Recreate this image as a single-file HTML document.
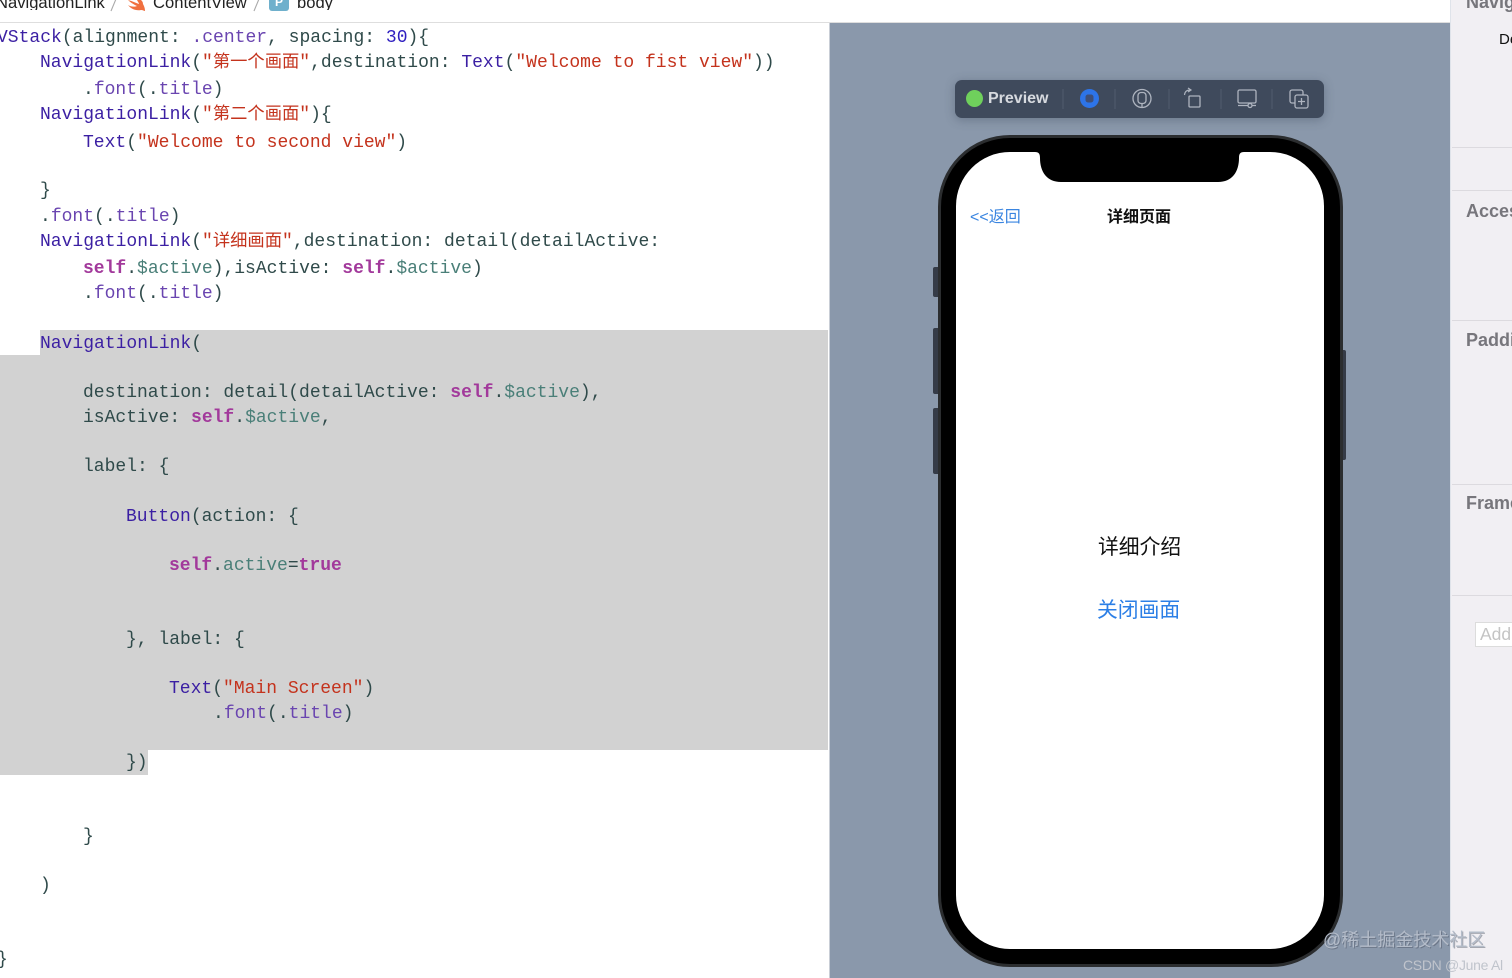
<!DOCTYPE html>
<html><head><meta charset="utf-8"><style>
html,body{margin:0;padding:0;width:1512px;height:978px;overflow:hidden;background:#fff}
body{position:relative;font-family:"Liberation Sans","Noto Sans CJK SC",sans-serif}
#w{position:absolute;left:0;top:0;width:1512px;height:978px;filter:blur(.35px);overflow:hidden}
.a{position:absolute}
.l{position:absolute;margin-top:1px;font:18px/24px "Liberation Mono","Noto Sans CJK SC",monospace;white-space:pre;color:#2f4a4a}
.l i{font-style:normal;font-size:17.3px}
.b{color:#3b1fa3}.p{color:#6a45b0}.s{color:#c4331d}.k{color:#a2399b;font-weight:bold}.v{color:#4a7f78}.n{color:#2f1fc0}.d{color:#1f1f1f}
.h{position:absolute;background:#d2d2d2}
.sec{position:absolute;left:1466px;font-size:18px;font-weight:bold;color:#77767c;line-height:20px;white-space:nowrap}
.hr{position:absolute;left:1452px;width:60px;height:1px;background:#dcdadf}
</style></head><body><div id="w">
<div class="a" style="left:0;top:22px;width:1450px;height:1px;background:#dedede"></div>
<div class="a" style="left:0;top:-6px;font-size:16.600px;line-height:18px;color:#222;white-space:nowrap;width:1440px;height:16px;overflow:hidden"><span class="a" style="left:-4px;top:0">NavigationLink</span><span class="a" style="left:153px;top:0">ContentView</span><span class="a" style="left:297px;top:0">body</span></div>
<svg class="a" style="left:105px;top:0" width="160" height="12" viewBox="0 0 160 12" fill="none" stroke="#aaa" stroke-width="1.100"><path d="M6 11L11 -1M149 11L154 -1"/></svg>
<svg class="a" style="left:126px;top:0" width="20" height="11" viewBox="0 0 20 11"><path d="M2 0 C5 3 9 5 11 6 C9 7 5 7 2 5 C5 9 10 11 15 10 C17 10 18 11 19 11 C19 8 18 6 17 4 C17 2 16 1 15 0 L11 0 C12 2 13 3 13 4 C10 3 6 1 2 0Z" fill="#f0703f"/></svg>
<div class="a" style="left:269px;top:-6px;width:20px;height:17px;border-radius:3px;background:#6fb0cc;color:#fff;font-size:12px;font-weight:bold;text-align:center;line-height:17px">P</div>

<div class="h" style="left:40px;top:330px;width:788px;height:25px"></div>
<div class="h" style="left:0;top:355px;width:828px;height:395px"></div>
<div class="h" style="left:0;top:750px;width:148px;height:25px"></div>

<div class="l" style="left:-3px;top:25px"><span class="b">VStack</span>(alignment: <span class="p">.center</span>, spacing: <span class="n">30</span>){</div>
<div class="l" style="left:40px;top:50px"><span class="b">NavigationLink</span>(<span class="s">"<i>第一个画面</i>"</span>,destination: <span class="b">Text</span>(<span class="s">"Welcome to fist view"</span>))</div>
<div class="l" style="left:83px;top:77px">.<span class="p">font</span>(.<span class="p">title</span>)</div>
<div class="l" style="left:40px;top:102px"><span class="b">NavigationLink</span>(<span class="s">"<i>第二个画面</i>"</span>){</div>
<div class="l" style="left:83px;top:130px"><span class="b">Text</span>(<span class="s">"Welcome to second view"</span>)</div>
<div class="l" style="left:40px;top:178px">}</div>
<div class="l" style="left:40px;top:204px">.<span class="p">font</span>(.<span class="p">title</span>)</div>
<div class="l" style="left:40px;top:229px"><span class="b">NavigationLink</span>(<span class="s">"<i>详细画面</i>"</span>,destination: detail(detailActive:</div>
<div class="l" style="left:83px;top:256px"><span class="k">self</span>.<span class="v">$active</span>),isActive: <span class="k">self</span>.<span class="v">$active</span>)</div>
<div class="l" style="left:83px;top:281px">.<span class="p">font</span>(.<span class="p">title</span>)</div>
<div class="l" style="left:40px;top:331px"><span class="b">NavigationLink</span>(</div>
<div class="l" style="left:83px;top:380px">destination: detail(detailActive: <span class="k">self</span>.<span class="v">$active</span>),</div>
<div class="l" style="left:83px;top:405px">isActive: <span class="k">self</span>.<span class="v">$active</span>,</div>
<div class="l" style="left:83px;top:454px">label: {</div>
<div class="l" style="left:126px;top:504px"><span class="b">Button</span>(action: {</div>
<div class="l" style="left:169px;top:553px"><span class="k">self</span>.<span class="v">active</span>=<span class="k">true</span></div>
<div class="l" style="left:126px;top:627px">}, label: {</div>
<div class="l" style="left:169px;top:676px"><span class="b">Text</span>(<span class="s">"Main Screen"</span>)</div>
<div class="l" style="left:213px;top:701px">.<span class="p">font</span>(.<span class="p">title</span>)</div>
<div class="l" style="left:126px;top:750px">})</div>
<div class="l" style="left:83px;top:824px">}</div>
<div class="l" style="left:40px;top:873px">)</div>
<div class="l" style="left:-3px;top:947px">}</div>

<div class="a" style="left:829px;top:23px;width:621px;height:955px;background:#8a98ab;border-left:1px solid #c9ced6;box-sizing:border-box"></div>
<div class="a" style="left:1450px;top:0;width:62px;height:978px;background:#f1eff3;border-left:1px solid #dfe3ea;box-sizing:border-box"></div>
<div class="hr" style="top:147px"></div><div class="hr" style="top:190px"></div><div class="hr" style="top:320px"></div><div class="hr" style="top:484px"></div><div class="hr" style="top:595px"></div>
<div class="sec" style="top:-8px">Navig</div>
<div class="a" style="left:1499px;top:31px;font-size:15px;line-height:18px;color:#111">De</div>
<div class="sec" style="top:201px">Acces</div>
<div class="sec" style="top:330px">Paddi</div>
<div class="sec" style="top:493px">Frame</div>
<div class="a" style="left:1475px;top:622px;width:40px;height:25px;background:#fff;border:1px solid #dcdcdc;border-right:0;box-sizing:border-box;font-size:17.500px;line-height:23px;color:#c4c4c4;padding-left:4px;overflow:hidden;white-space:nowrap">Add</div>

<div class="a" style="left:955px;top:80px;width:369px;height:38px;background:#3f4a5c;border-radius:7px;box-shadow:0 2px 10px rgba(50,60,80,.35)"></div>
<div class="a" style="left:966px;top:90px;width:17px;height:17px;border-radius:50%;background:#6fd05c"></div>
<div class="a" style="left:988px;top:89px;font-size:16px;line-height:20px;color:#e8eaee;font-weight:bold;opacity:.9">Preview</div>
<svg class="a" style="left:955px;top:80px" width="369" height="38" viewBox="0 0 369 38" fill="none" stroke="#aeb4bf" stroke-width="1.300">
<g stroke="#515c6e" stroke-width="1"><path d="M108 9V29M160 9V29M214 9V29M266 9V29M317 9V29"/></g>
<circle cx="134.500" cy="18.500" r="9.500" fill="#2d74e8" stroke="none"/><rect x="130.500" y="14.500" width="8" height="8" rx="2.500" fill="#3f4f78" stroke="none"/>
<circle cx="187" cy="18.500" r="9"/><rect x="183" y="12.500" width="8" height="11" rx="3"/><path d="M187 23.500V27.500"/>
<rect x="234" y="16" width="11" height="11" rx="1"/><path d="M229.500 15C230 11 232 10 236 10M233 8L236 10L233 12" stroke-width="1.200"/>
<rect x="283" y="10" width="18" height="13" rx="1.500"/><path d="M283 25.500H301"/><circle cx="295" cy="25.500" r="2" fill="#3f4a5c"/>
<rect x="335" y="10" width="13" height="13" rx="2"/><rect x="340" y="15" width="13" height="13" rx="2" fill="#3f4a5c"/><path d="M346.500 18V25M343 21.500H350"/>
</svg>

<div class="a" style="left:933px;top:267px;width:5px;height:30px;background:#353b47;border-radius:2px 0 0 2px"></div>
<div class="a" style="left:933px;top:328px;width:5px;height:66px;background:#353b47;border-radius:2px 0 0 2px"></div>
<div class="a" style="left:933px;top:408px;width:5px;height:66px;background:#353b47;border-radius:2px 0 0 2px"></div>
<div class="a" style="left:1343px;top:350px;width:3px;height:110px;background:#353b47;border-radius:0 2px 2px 0"></div>
<div class="a" style="left:938px;top:135px;width:405px;height:832px;box-sizing:border-box;background:#000;border-radius:72px;border:3px solid #2b2d2f"></div>
<div class="a" style="left:956px;top:152px;width:368px;height:797px;background:#fff;border-radius:54px"></div>
<svg class="a" style="left:1030px;top:150px" width="219" height="34" viewBox="0 0 219 34"><path d="M0 0H219V2H214C210 2 209 4 209 8C209 22 202 32 188 32H31C17 32 10 22 10 8C10 4 9 2 5 2H0Z" fill="#000"/></svg>
<div class="a" style="left:970px;top:208px;font-size:16px;line-height:19px;color:#3a85e0;white-space:nowrap">&lt;&lt;返回</div>
<div class="a" style="left:1107px;top:208px;font-size:16px;line-height:20px;font-weight:bold;color:#111;white-space:nowrap">详细页面</div>
<div class="a" style="left:1098px;top:534px;font-size:20.800px;line-height:28px;color:#111;white-space:nowrap">详细介绍</div>
<div class="a" style="left:1097px;top:597px;font-size:20.800px;line-height:28px;color:#2c7fe6;white-space:nowrap">关闭画面</div>

<div class="a" style="left:1323px;top:929px;font-size:18px;line-height:23px;color:#b4bcc9;text-shadow:1px 1px 0 rgba(70,80,95,.45);white-space:nowrap">@稀土掘金技术社区</div>
<div class="a" style="left:1403px;top:957px;font-size:14px;line-height:17px;color:#c0c4cc;white-space:nowrap;letter-spacing:-.3px">CSDN @June Al</div>
</div></body></html>
